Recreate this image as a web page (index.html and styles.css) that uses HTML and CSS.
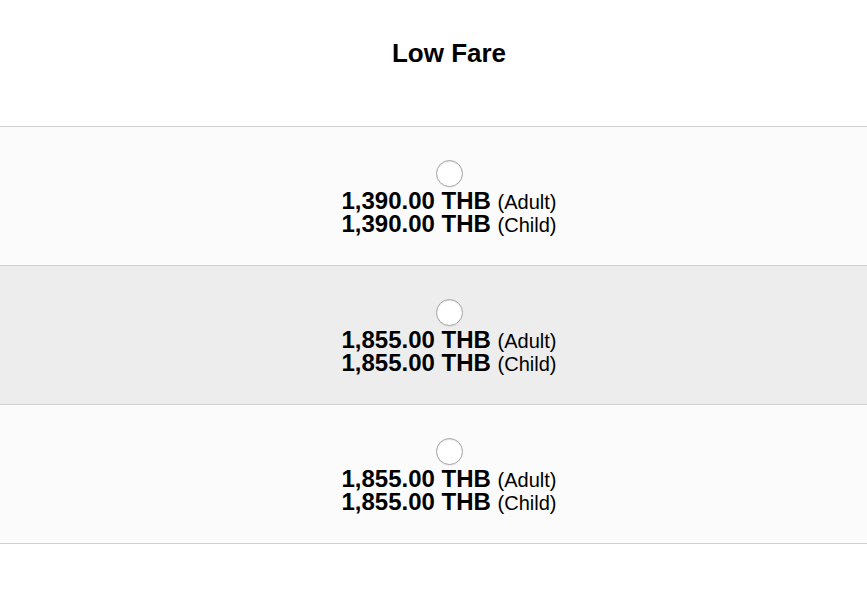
FILE: index.html
```html
<!DOCTYPE html>
<html lang="en">
<head>
    <meta charset="UTF-8">
    <meta name="viewport" content="width=device-width, initial-scale=1.0">
    <title>Low Fare</title>
    <link rel="stylesheet" href="styles.css">
</head>
<body>
    <div class="fare-table">
        <div class="fare-head">Low Fare</div>

        <label class="fare-row">
            <input type="radio" name="fare" value="1">
            <div class="price-line"><b>1,390.00 THB</b> <span>(Adult)</span></div>
            <div class="price-line"><b>1,390.00 THB</b> <span>(Child)</span></div>
        </label>

        <label class="fare-row alt">
            <input type="radio" name="fare" value="2">
            <div class="price-line"><b>1,855.00 THB</b> <span>(Adult)</span></div>
            <div class="price-line"><b>1,855.00 THB</b> <span>(Child)</span></div>
        </label>

        <label class="fare-row">
            <input type="radio" name="fare" value="3">
            <div class="price-line"><b>1,855.00 THB</b> <span>(Adult)</span></div>
            <div class="price-line"><b>1,855.00 THB</b> <span>(Child)</span></div>
        </label>
    </div>
</body>
</html>
```

FILE: styles.css
```css
body {
    font-family: "Liberation Sans", Arial, sans-serif;
    background-color: #ffffff;
    color: #000000;
    margin: 0;
    padding: 0;
}
.fare-table {
    border-bottom: 1px solid #d0d0d0;
}
.fare-head {
    padding: 38px 0 58px 31px;
    height: 30px;
    line-height: 30px;
    font-size: 26px;
    font-weight: bold;
    text-align: center;
}
.fare-row {
    display: block;
    height: 138px;
    box-sizing: content-box;
    padding-left: 31px;
    border-top: 1px solid #d0d0d0;
    background-color: #fbfbfb;
    text-align: center;
    cursor: pointer;
}
.fare-row.alt {
    background-color: #ededed;
}
.fare-row input {
    appearance: none;
    -webkit-appearance: none;
    display: block;
    width: 27px;
    height: 27px;
    margin: 0 auto 2px;
    position: relative;
    top: 33px;
    border: 1px solid #a6a6a6;
    border-radius: 50%;
    background-color: #ffffff;
    box-sizing: border-box;
    box-shadow: inset 0 1px 1px rgba(0, 0, 0, 0.12), 0 1px 0 rgba(0, 0, 0, 0.05);
}
.fare-row input:checked {
    background: radial-gradient(circle, #333 0 5px, #fff 6px);
}
.price-line {
    position: relative;
    top: 33px;
    height: 23px;
    line-height: 23px;
    font-size: 24px;
}
.price-line span {
    font-size: 20px;
    line-height: 20px;
}
```
